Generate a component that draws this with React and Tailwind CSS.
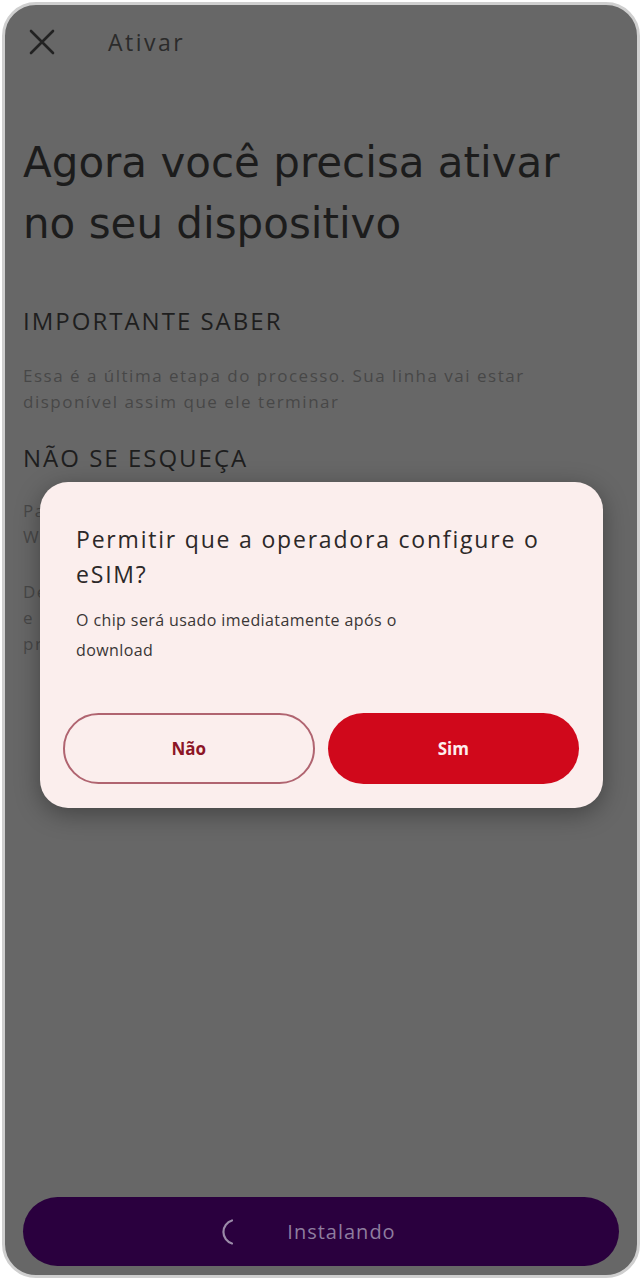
export default function App() {
  return (
    <div className="w-[642px] h-[1280px] bg-white p-[2px] font-['Open_Sans','Noto_Sans',sans-serif]">
      <div className="relative flex flex-col h-full rounded-[34px] border-[3px] border-[#cfcfcf] bg-[#676767] overflow-hidden px-[18px]">
        {/* header */}
        <div className="mt-[9px] h-[56px] flex items-center">
          <svg width="28" height="28" viewBox="0 0 28 28" className="ml-[5px]">
            <path d="M3 3 L25 25 M25 3 L3 25" stroke="#222" strokeWidth="2.6" strokeLinecap="round" />
          </svg>
          <span className="ml-[52px] text-[23px] tracking-[2.5px] text-[#2b2b2b]">Ativar</span>
        </div>

        <h1 className="mt-[62px] font-['DejaVu_Sans',sans-serif] text-[42px] leading-[61px] text-[#1c1c1c]">
          Agora você precisa ativar
          <br />
          no seu dispositivo
        </h1>

        <h2 className="mt-[51px] text-[24px] leading-[32px] tracking-[2px] text-[#1e1e1e]">IMPORTANTE SABER</h2>
        <p className="mt-[26px] text-[17px] leading-[26px] tracking-[1.5px] text-[#474747]">
          Essa é a última etapa do processo. Sua linha vai estar
          <br />
          disponível assim que ele terminar
        </p>

        <h2 className="mt-[27px] text-[24px] leading-[32px] tracking-[2px] text-[#1e1e1e]">NÃO SE ESQUEÇA</h2>
        <p className="mt-[24px] text-[17px] leading-[26px] tracking-[1.5px] text-[#474747]">
          Para concluir, mantenha seu celular conectado ao
          <br />
          Wi-Fi durante toda a instalação
        </p>
        <p className="mt-[29px] text-[17px] leading-[26px] tracking-[1.5px] text-[#474747]">
          Depois de ativar, o chip antigo deixa de funcionar
          <br />
          e deve ser descartado. Deixe o celular ligado até
          <br />
          processo terminar
        </p>

        {/* bottom button */}
        <div className="mt-auto mb-[9px] h-[69px] rounded-full bg-[#2a003e] flex items-center justify-center pr-[25px]">
          <svg width="26" height="26" viewBox="0 0 26 26">
            <path d="M11 1.5 A12 12 0 0 0 11 24.5" fill="none" stroke="#9a8aa8" strokeWidth="2.2" strokeLinecap="round" />
          </svg>
          <span className="ml-[40px] text-[20px] tracking-[1px] text-[#8e7d9e]">Instalando</span>
        </div>

        {/* dialog */}
        <div className="absolute left-[35px] top-[477px] w-[563px] h-[326px] rounded-[28px] bg-[#fbeeed] shadow-[0_6px_24px_rgba(0,0,0,0.35)] flex flex-col pt-[40px] pl-[23px] pr-[24px]">
          <p className="pl-[13px] text-[23px] leading-[35px] tracking-[1.8px] text-[#2c2828]">
            Permitir que a operadora configure o
            <br />
            eSIM?
          </p>
          <p className="pl-[13px] mt-[13px] text-[16px] leading-[30px] tracking-[0.4px] text-[#3a3636]">
            O chip será usado imediatamente após o
            <br />
            download
          </p>
          <div className="mt-[48px] flex gap-[13px]">
            <button className="w-[252px] h-[71px] rounded-full border-[2px] border-[#b06470] text-[17px] font-bold text-[#8c1526]">
              Não
            </button>
            <button className="w-[252px] h-[71px] rounded-full bg-[#d0081b] text-[17px] font-bold text-[#fdeeee]">
              Sim
            </button>
          </div>
        </div>
      </div>
    </div>
  )
}
